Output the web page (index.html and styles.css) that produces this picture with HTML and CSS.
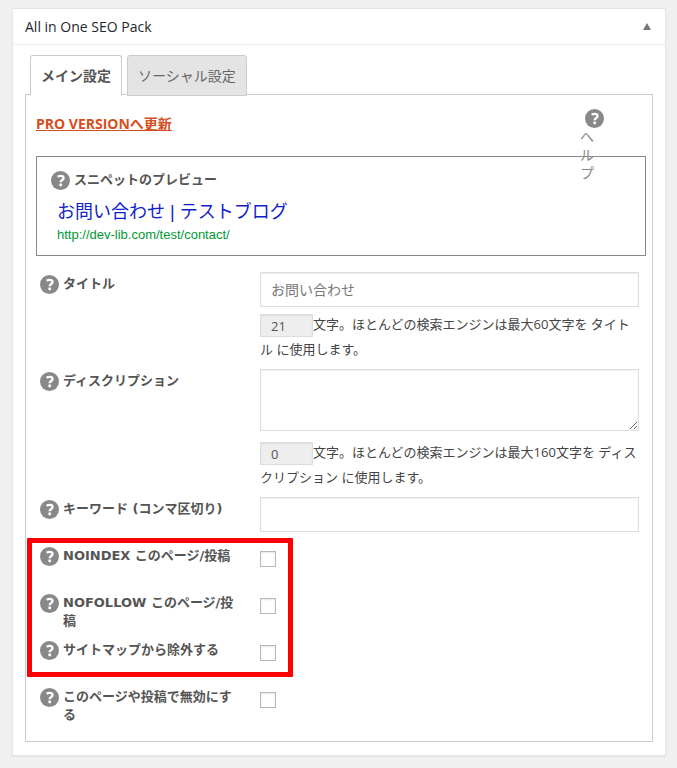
FILE: index.html
```html
<!DOCTYPE html>
<html lang="ja">
<head>
  <meta charset="UTF-8">
  <meta name="viewport" content="width=device-width, initial-scale=1">
  <title>All in One SEO Pack</title>
  <link rel="stylesheet" href="styles.css">
</head>
<body>

  <!-- help icon, reused by every row -->
  <svg class="sprite" aria-hidden="true">
    <symbol id="help" viewBox="0 0 20 20">
      <circle cx="10" cy="10" r="10" fill="#888"/>
      <path d="M7 6.2C8 5.4 9 5.1 10.1 5.1C12 5.1 13.2 6 13.2 7.4C13.2 8.5 12.5 9 11.5 9.7C10.5 10.3 10.2 10.8 10.2 11.8" fill="none" stroke="#fff" stroke-width="2.5"/>
      <circle cx="10.2" cy="14.6" r="1.6" fill="#fff"/>
    </symbol>
  </svg>

  <section class="postbox">
    <header class="postbox-header">
      <h2>All in One SEO Pack</h2>
      <button type="button" class="toggle" aria-label="パネルを閉じる">
        <svg width="8" height="7" viewBox="0 0 8 7"><path d="M4 0L8 7H0z" fill="#72777c"/></svg>
      </button>
    </header>

    <div class="inside">
      <nav class="tabs">
        <a href="#main" class="tab active">メイン設定</a>
        <a href="#social" class="tab">ソーシャル設定</a>
      </nav>

      <form class="panel" id="main">
        <div class="top">
          <a href="#pro" class="pro">PRO VERSIONへ更新</a>
          <a href="#help-all" class="help-all"><svg class="icon"><use href="#help"/></svg>ヘルプ</a>
        </div>

        <div class="snippet">
          <div class="label">
            <a href="#help-snippet" aria-label="ヘルプを表示"><svg class="icon"><use href="#help"/></svg></a>
            <span>スニペットのプレビュー</span>
          </div>
          <div class="result">
            <div class="result-title">お問い合わせ | テストブログ</div>
            <div class="result-url">http://dev-lib.com/test/contact/</div>
          </div>
        </div>

        <div class="row">
          <div class="label">
            <a href="#help-title" aria-label="ヘルプを表示"><svg class="icon"><use href="#help"/></svg></a>
            <label for="title">タイトル</label>
          </div>
          <div class="field">
            <input type="text" id="title" class="text" placeholder="お問い合わせ">
            <p class="note"><input type="text" class="count" value="21" aria-label="タイトルの文字数" readonly>文字。ほとんどの検索エンジンは最大60文字を タイトル に使用します。</p>
          </div>
        </div>

        <div class="row">
          <div class="label">
            <a href="#help-description" aria-label="ヘルプを表示"><svg class="icon"><use href="#help"/></svg></a>
            <label for="description">ディスクリプション</label>
          </div>
          <div class="field">
            <textarea id="description"></textarea>
            <p class="note"><input type="text" class="count" value="0" aria-label="ディスクリプションの文字数" readonly>文字。ほとんどの検索エンジンは最大160文字を ディスクリプション に使用します。</p>
          </div>
        </div>

        <div class="row">
          <div class="label">
            <a href="#help-keywords" aria-label="ヘルプを表示"><svg class="icon"><use href="#help"/></svg></a>
            <label for="keywords">キーワード (コンマ区切り)</label>
          </div>
          <div class="field">
            <input type="text" id="keywords" class="text">
          </div>
        </div>

        <div class="marked">
          <div class="row">
            <div class="label">
              <a href="#help-noindex" aria-label="ヘルプを表示"><svg class="icon"><use href="#help"/></svg></a>
              <label for="noindex">NOINDEX このページ/投稿</label>
            </div>
            <div class="field"><input type="checkbox" id="noindex"></div>
          </div>
          <div class="row">
            <div class="label">
              <a href="#help-nofollow" aria-label="ヘルプを表示"><svg class="icon"><use href="#help"/></svg></a>
              <label for="nofollow">NOFOLLOW このページ/投稿</label>
            </div>
            <div class="field"><input type="checkbox" id="nofollow"></div>
          </div>
          <div class="row">
            <div class="label">
              <a href="#help-sitemap" aria-label="ヘルプを表示"><svg class="icon"><use href="#help"/></svg></a>
              <label for="sitemap">サイトマップから除外する</label>
            </div>
            <div class="field"><input type="checkbox" id="sitemap"></div>
          </div>
        </div>

        <div class="row">
          <div class="label">
            <a href="#help-disable" aria-label="ヘルプを表示"><svg class="icon"><use href="#help"/></svg></a>
            <label for="disable">このページや投稿で無効にする</label>
          </div>
          <div class="field"><input type="checkbox" id="disable"></div>
        </div>
      </form>
    </div>
  </section>

</body>
</html>
```
FILE: styles.css
```css
*,
*::after {
  box-sizing: border-box;
}

body {
  margin: 0;
  padding: 8px 11px 13px 12px;
  background: #f0f0f0;
  color: #444;
  font-family: "Open Sans", "Noto Sans CJK JP", sans-serif;
  font-size: 13px;
  line-height: 18px;
}

.sprite {
  position: absolute;
  width: 0;
  height: 0;
}

.icon {
  display: block;
  width: 19px;
  height: 19px;
}

/* box */
.postbox {
  background: #fff;
  border: 1px solid #e5e5e5;
  box-shadow: 0 1px 1px rgba(0, 0, 0, 0.04);
}

.postbox-header {
  display: flex;
  align-items: center;
  justify-content: space-between;
  height: 36px;
  padding: 0 12px;
  border-bottom: 1px solid #eee;
}

.postbox-header h2 {
  margin: 0;
  color: #23282d;
  font-size: 14px;
  font-weight: 500;
}

.toggle {
  display: flex;
  padding: 2px;
  border: 0;
  background: none;
  cursor: pointer;
}

.inside {
  padding: 10px 12px 13px;
}

/* tabs */
.tabs {
  display: flex;
  gap: 5px;
  padding-left: 5px;
  margin-bottom: -2px;
  position: relative;
}

.tab {
  padding: 9px 10px;
  border: 1px solid #ccc;
  border-radius: 3px 3px 0 0;
  background: #e4e4e4;
  color: #666;
  font-size: 14px;
  line-height: 21px;
  text-decoration: none;
}

.tab.active {
  background: #fff;
  border-bottom-color: #fff;
  color: #555;
  font-weight: bold;
}

.panel {
  padding: 10px 6px 9px 10px;
  border: 1px solid #ccc;
}

.top {
  position: relative;
  padding: 9px 0 22px;
  line-height: 20px;
}

.pro {
  color: #d54e21;
  font-size: 14px;
  font-weight: bold;
}

/* hangs down over the snippet box */
.help-all {
  position: absolute;
  top: 4px;
  right: 42px;
  width: 24px;
  padding-right: 10px;
  color: #888;
  font-size: 14px;
  line-height: 18px;
  text-decoration: none;
  word-break: break-all;
}

.help-all .icon {
  margin-left: 5px;
}

.label {
  display: flex;
  gap: 4px;
  color: #555;
  font-family: "DejaVu Sans", "Noto Sans CJK JP", sans-serif;
  font-weight: bold;
}

/* google preview */
.snippet {
  margin-bottom: 16px;
  padding: 14px 14px 10px;
  border: 1px solid #888;
}

.result {
  padding: 9px 6px 0;
}

.result-title {
  color: #12c;
  font-family: "Liberation Sans", "Noto Sans CJK JP", sans-serif;
  font-size: 18px;
  line-height: 26px;
}

.result-url {
  color: #093;
  font-family: "Liberation Sans", sans-serif;
  font-size: 13px;
  line-height: 20px;
}

/* option rows */
.row {
  display: grid;
  grid-template-columns: 224px 1fr;
  min-height: 47px;
}

.row .label {
  padding: 3px 24px 0 4px;
}

.field {
  padding-right: 7px;
}

.text,
textarea {
  display: block;
  width: 100%;
  border: 1px solid #ddd;
  background: #fff;
  box-shadow: inset 0 1px 2px rgba(0, 0, 0, 0.07);
  font-family: inherit;
  font-size: 14px;
}

.text {
  height: 35px;
  padding: 0 10px;
}

.text::placeholder {
  color: #777;
}

textarea {
  height: 62px;
  margin-bottom: 9px;
  resize: vertical;
}

.note {
  margin: 5px 0 7px;
  line-height: 25px;
}

.count {
  width: 53px;
  height: 23px;
  padding: 0 10px;
  border: 1px solid #ddd;
  background: #eee;
  box-shadow: inset 0 1px 2px rgba(0, 0, 0, 0.07);
  color: #555;
  font-family: inherit;
  font-size: 13px;
  vertical-align: middle;
}

input[type="checkbox"] {
  appearance: none;
  display: block;
  width: 16px;
  height: 16px;
  margin: 7px 0 0;
  border: 1px solid #b4b9be;
  background: #fff;
  box-shadow: inset 0 1px 2px rgba(0, 0, 0, 0.1);
}

/* red frame around the three indexing options */
.marked {
  position: relative;
}

.marked::after {
  content: "";
  position: absolute;
  top: -6px;
  bottom: 8px;
  left: -9px;
  width: 266px;
  border: 5px solid #f00;
  border-radius: 1px;
  pointer-events: none;
}
```
